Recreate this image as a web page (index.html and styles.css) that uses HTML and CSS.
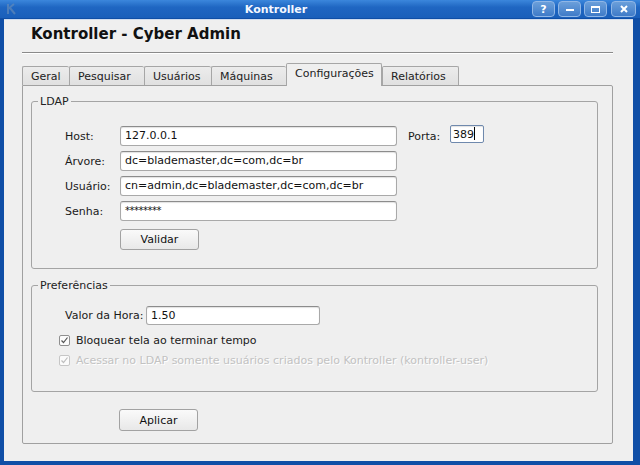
FILE: index.html
```html
<!DOCTYPE html>
<html lang="pt-BR">
<head>
  <meta charset="UTF-8">
  <title>Kontroller</title>
  <link rel="stylesheet" href="styles.css">
</head>
<body>
  <div class="window">
    <!-- barra de titulo -->
    <div class="titlebar">
      <svg class="app-icon" width="12" height="12" viewBox="0 0 12 12">
        <path d="M2 1v10M2 6l6-5M4 5l5 6" stroke="#6c8fb8" stroke-width="2" fill="none"/>
      </svg>
      <div class="title">Kontroller</div>
      <div class="wm-buttons">
        <span class="wm-btn">?</span>
        <span class="wm-btn"><svg width="10" height="8" viewBox="0 0 10 8"><rect x="1" y="4" width="8" height="2" fill="#fff"/></svg></span>
        <span class="wm-btn"><svg width="11" height="9" viewBox="0 0 11 9"><rect x="1.5" y="1.5" width="8" height="6" fill="none" stroke="#fff"/><rect x="1" y="1" width="9" height="2" fill="#fff"/></svg></span>
        <span class="wm-btn wm-close"><svg width="10" height="8" viewBox="0 0 10 8"><path d="M2 1l6 6M8 1l-6 6" stroke="#fff" stroke-width="2"/></svg></span>
      </div>
    </div>

    <div class="client">
      <h1 class="heading">Kontroller - Cyber Admin</h1>
      <div class="sep"></div>

      <div class="tabs">
        <div class="tab">Geral</div>
        <div class="tab">Pesquisar</div>
        <div class="tab">Usuários</div>
        <div class="tab">Máquinas</div>
        <div class="tab active">Configurações</div>
        <div class="tab">Relatórios</div>
      </div>

      <div class="panel">
        <fieldset class="group ldap">
          <legend>LDAP</legend>
          <div class="row">
            <label class="lbl">Host:</label>
            <div class="field wide">127.0.0.1</div>
            <label class="lbl porta">Porta:</label>
            <div class="field port focus">389<span class="caret"></span></div>
          </div>
          <div class="row">
            <label class="lbl">Árvore:</label>
            <div class="field wide">dc=blademaster,dc=com,dc=br</div>
          </div>
          <div class="row">
            <label class="lbl">Usuário:</label>
            <div class="field wide">cn=admin,dc=blademaster,dc=com,dc=br</div>
          </div>
          <div class="row">
            <label class="lbl">Senha:</label>
            <div class="field wide pass">********</div>
          </div>
          <button class="btn validar">Validar</button>
        </fieldset>

        <fieldset class="group prefs">
          <legend>Preferências</legend>
          <div class="row">
            <label class="lbl hora">Valor da Hora:</label>
            <div class="field hora-field">1.50</div>
          </div>
          <div class="check">
            <span class="box"><svg width="9" height="9" viewBox="0 0 9 9"><path d="M1.5 4.5l2 2 4-5" stroke="#555" stroke-width="1.2" fill="none"/></svg></span>
            Bloquear tela ao terminar tempo
          </div>
          <div class="check disabled">
            <span class="box"><svg width="9" height="9" viewBox="0 0 9 9"><path d="M1.5 4.5l2 2 4-5" stroke="#bdbdbd" stroke-width="1.2" fill="none"/></svg></span>
            Acessar no LDAP somente usuários criados pelo Kontroller (kontroller-user)
          </div>
        </fieldset>

        <button class="btn aplicar">Aplicar</button>
      </div>
    </div>
  </div>
</body>
</html>
```

FILE: styles.css
```css
html, body {
  margin: 0;
  padding: 0;
}
body {
  width: 640px;
  height: 465px;
  overflow: hidden;
  background: #0f4ea6;
  font-family: "DejaVu Sans", "Liberation Sans", sans-serif;
  font-size: 11px;
  color: #1a1a1a;
}
.window {
  display: flex;
  flex-direction: column;
  height: 465px;
}

/* barra de titulo */
.titlebar {
  height: 18px;
  display: flex;
  align-items: center;
  background: linear-gradient(#3b87dc, #1f66c2 40%, #1a5fba);
}
.app-icon {
  margin-left: 6px;
  opacity: 0.6;
}
.title {
  flex: 1;
  text-align: center;
  color: #f4f8ff;
  font-weight: bold;
  font-size: 11px;
  padding-left: 2px;
}
.wm-buttons {
  display: flex;
  gap: 3px;
  margin-right: 4px;
}
.wm-btn {
  width: 21px;
  height: 14px;
  border: 1px solid #8fb6e6;
  border-radius: 4px;
  background: linear-gradient(#6b9fda, #3f7bc8);
  color: #fff;
  font-weight: bold;
  font-size: 11px;
  display: flex;
  align-items: center;
  justify-content: center;
}
.wm-close {
  width: 23px;
  margin-left: 1px;
}

.client {
  flex: 1;
  margin: 1px 7px 4px 4px;
  background: #efefef;
  border-top: 1px solid #cfdcef;
  padding: 0 20px 0 18px;
}
.heading {
  margin: 4px 0 0 9px;
  font-size: 15px;
  line-height: 20px;
  font-weight: bold;
  color: #111;
}
.sep {
  margin-top: 8px;
  border-top: 1px solid #8a8a8a;
  border-bottom: 1px solid #fff;
}

/* abas */
.tabs {
  display: flex;
  margin-top: 11px;
  height: 20px;
  align-items: flex-end;
}
.tab {
  height: 19px;
  line-height: 19px;
  padding: 0 8px;
  border: 1px solid #a6a6a6;
  border-bottom: none;
  border-right: none;
  border-radius: 2px 2px 0 0;
  background: linear-gradient(#ececec, #e0e0e0);
  color: #222;
  box-sizing: border-box;
}
.tab:nth-child(1) { width: 47px; }
.tab:nth-child(2) { width: 75px; }
.tab:nth-child(3) { width: 67px; }
.tab:nth-child(4) { width: 75px; }
.tab:nth-child(6) { width: 77px; border-right: 1px solid #a6a6a6; }
.tab.active {
  width: 96px;
  height: 23px;
  line-height: 20px;
  background: #efefef;
  border-right: 1px solid #a6a6a6;
  margin-bottom: -1px;
  position: relative;
  z-index: 1;
}

.panel {
  border: 1px solid #a0a0a0;
  border-radius: 0 2px 2px 2px;
  height: 359px;
  box-sizing: border-box;
  padding: 9px 14px 0 8px;
}

/* grupos */
.group {
  margin: 0;
  border: 1px solid #a4a4a4;
  border-radius: 3px;
  padding: 18px 0 13px 6px;
}
.group legend {
  margin-left: 0;
  padding: 0 2px;
  line-height: 13px;
  color: #222;
}
.ldap {
  height: 174px;
  box-sizing: border-box;
}
.ldap .row {
  margin-left: 27px;
}
.prefs {
  margin-top: 10px;
  height: 113px;
  box-sizing: border-box;
  padding: 13px 0 0 6px;
}
.row {
  display: flex;
  align-items: center;
  height: 20px;
  margin-bottom: 5px;
}
.prefs .row {
  margin-left: 27px;
}
.lbl {
  width: 55px;
}
.lbl.porta {
  width: 42px;
  margin-left: 11px;
}
.lbl.hora {
  width: 81px;
}
.field {
  height: 19px;
  box-sizing: border-box;
  border: 1px solid #a9a9a9;
  border-top-color: #8c8c8c;
  border-radius: 3px;
  background: #fff;
  box-shadow: inset 0 1px 1px #e2e2e2;
  padding: 0 4px;
  line-height: 17px;
  color: #111;
}
.field.wide {
  width: 277px;
  height: 20px;
  line-height: 18px;
}
.field.pass {
  letter-spacing: -0.5px;
  font-size: 10px;
}
.field.port {
  width: 34px;
  height: 18px;
  border-color: #6f89ad;
  border-radius: 2px;
  padding: 0 2px;
  margin-top: -4px;
}
.caret {
  display: inline-block;
  width: 1px;
  height: 13px;
  background: #000;
  vertical-align: -2px;
}
.hora-field {
  width: 174px;
}

.btn {
  font-family: inherit;
  font-size: 11px;
  color: #111;
  width: 79px;
  height: 21px;
  border: 1px solid #a2a2a2;
  border-radius: 3px;
  background: linear-gradient(#fafafa, #e8e8e8);
  padding: 0;
  display: block;
}
.validar {
  margin-top: 8px;
}
.ldap .validar {
  margin-left: 82px;
}
.aplicar {
  margin: 17px 0 0 88px;
  height: 22px;
}

.check {
  display: flex;
  align-items: center;
  height: 20px;
  margin-left: 21px;
}
.check .box {
  width: 11px;
  height: 11px;
  box-sizing: border-box;
  border: 1px solid #8f8f8f;
  border-radius: 2px;
  background: #fbfbfb;
  margin-right: 6px;
  display: flex;
  align-items: center;
  justify-content: center;
}
.check.disabled {
  color: #c2c2c2;
  text-shadow: 1px 1px 0 #fff;
}
.check.disabled .box {
  border-color: #c6c6c6;
}
```
